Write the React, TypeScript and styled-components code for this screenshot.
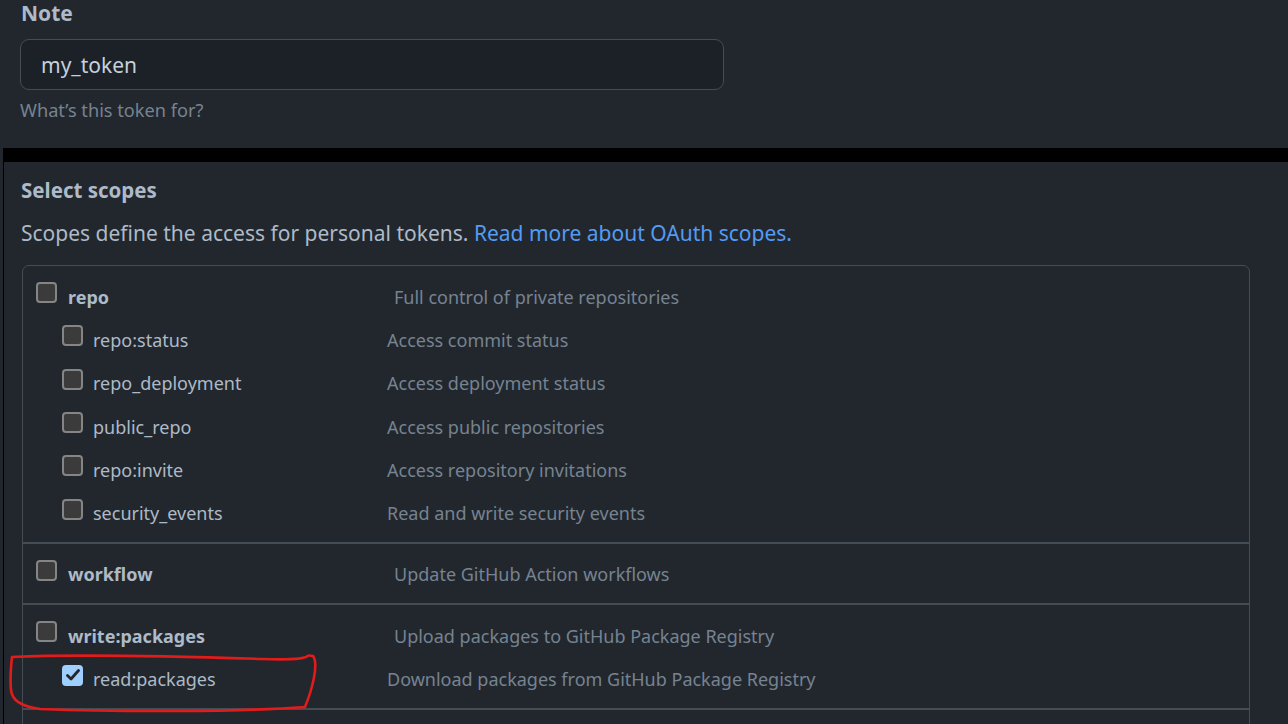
import styled, { createGlobalStyle } from "styled-components";

const GlobalStyle = createGlobalStyle`
  html, body {
    margin: 0;
    padding: 0;
    background: #22272e;
  }
  body {
    font-family: "Segoe UI", "Noto Sans", "Open Sans", sans-serif;
    color: #adbac7;
    overflow: hidden;
  }
`;

const Page = styled.div`
  position: relative;
  width: 1288px;
  height: 724px;
  overflow: hidden;
`;

const NoteSection = styled.section`
  padding: 0 0 0 20px;
  height: 149px;
`;

const FieldLabel = styled.div`
  font-size: 21px;
  font-weight: 700;
  line-height: 28px;
  margin-top: -1px;
  padding-left: 1px;
`;

const TextInput = styled.div`
  box-sizing: border-box;
  width: 704px;
  height: 51px;
  margin-top: 12px;
  padding: 0 20px;
  display: flex;
  align-items: center;
  background: #1c2128;
  border: 1px solid #444c56;
  border-radius: 9px;
  font-size: 21px;
  color: #c5d1de;
`;

const Hint = styled.div`
  margin-top: 8px;
  font-size: 18.2px;
  color: #768390;
`;

const ScopesPanel = styled.section`
  margin-left: 3px;
  border-top: 14px solid #000;
  border-left: 1px solid #000;
  padding: 14px 38px 0 17px;
  height: 600px;
`;

const SectionTitle = styled.h3`
  margin: 0;
  font-size: 20.5px;
  font-weight: 700;
  line-height: 28px;
`;

const Lead = styled.p`
  margin: 15px 0 0;
  font-size: 21px;
  line-height: 28px;
  color: #adbac7;
`;

const Link = styled.a`
  color: #539bf5;
  text-decoration: none;
`;

const ScopeTable = styled.div`
  margin: 18px 0 0 1px;
  border: 1px solid #444c56;
  border-radius: 7px;
`;

const ScopeGroup = styled.div<{ $spacer?: boolean }>`
  padding: 9px 0 7px;
  min-height: ${({ $spacer }) => ($spacer ? "40px" : "0")};
  & + & {
    border-top: 2px solid #444c56;
  }
`;

const ScopeRow = styled.label<{ $nested?: boolean }>`
  display: flex;
  align-items: center;
  height: 43.3px;
  padding-left: ${({ $nested }) => ($nested ? "39px" : "13px")};
`;

const ScopeName = styled.div<{ $nested?: boolean }>`
  display: flex;
  align-items: center;
  gap: ${({ $nested }) => ($nested ? "10px" : "11px")};
  width: ${({ $nested }) => ($nested ? "325px" : "358px")};
  font-size: 18px;
  font-weight: ${({ $nested }) => ($nested ? 400 : 700)};
  color: #adbac7;
`;

const Box = styled.span<{ $checked?: boolean }>`
  box-sizing: border-box;
  flex: none;
  width: 21px;
  height: 21px;
  margin-top: -8px;
  border-radius: 4px;
  border: ${({ $checked }) => ($checked ? "none" : "2px solid #858585")};
  background: ${({ $checked }) => ($checked ? "#9fcfff" : "#3b3b3b")};
  display: flex;
  align-items: center;
  justify-content: center;
`;

const Description = styled.div`
  font-size: 18px;
  color: #768390;
`;

const Annotation = styled.svg`
  position: absolute;
  left: 0;
  top: 0;
  pointer-events: none;
`;

type Scope = { name: string; desc: string; nested?: boolean; checked?: boolean };

const groups: Scope[][] = [
  [
    { name: "repo", desc: "Full control of private repositories" },
    { name: "repo:status", desc: "Access commit status", nested: true },
    { name: "repo_deployment", desc: "Access deployment status", nested: true },
    { name: "public_repo", desc: "Access public repositories", nested: true },
    { name: "repo:invite", desc: "Access repository invitations", nested: true },
    { name: "security_events", desc: "Read and write security events", nested: true },
  ],
  [{ name: "workflow", desc: "Update GitHub Action workflows" }],
  [
    { name: "write:packages", desc: "Upload packages to GitHub Package Registry" },
    { name: "read:packages", desc: "Download packages from GitHub Package Registry", nested: true, checked: true },
  ],
];

function Checkbox({ checked }: { checked?: boolean }) {
  return (
    <Box $checked={checked}>
      {checked && (
        <svg width="14" height="12" viewBox="0 0 14 12">
          <path d="M1.5 6.5 L5 10 L12.5 1.5" fill="none" stroke="#262626" strokeWidth="2.8" strokeLinecap="round" strokeLinejoin="round" />
        </svg>
      )}
    </Box>
  );
}

export default function App() {
  return (
    <Page>
      <GlobalStyle />
      <NoteSection>
        <FieldLabel>Note</FieldLabel>
        <TextInput>my_token</TextInput>
        <Hint>What’s this token for?</Hint>
      </NoteSection>

      <ScopesPanel>
        <SectionTitle>Select scopes</SectionTitle>
        <Lead>
          Scopes define the access for personal tokens. <Link href="#">Read more about OAuth scopes.</Link>
        </Lead>
        <ScopeTable>
          {groups.map((group, gi) => (
            <ScopeGroup key={gi}>
              {group.map((s) => (
                <ScopeRow key={s.name} $nested={s.nested}>
                  <ScopeName $nested={s.nested}>
                    <Checkbox checked={s.checked} />
                    {s.name}
                  </ScopeName>
                  <Description>{s.desc}</Description>
                </ScopeRow>
              ))}
            </ScopeGroup>
          ))}
          <ScopeGroup $spacer />
        </ScopeTable>
      </ScopesPanel>

      <Annotation width="1288" height="724" viewBox="0 0 1288 724">
        <path
          d="M12 657 C 80 654, 200 657, 262 659 S 300 653, 313 656 C 319 664, 312 690, 305 707 C 240 712, 120 712, 40 709 C 20 706, 12 700, 11 690 C 10 680, 11 666, 12 657"
          fill="none"
          stroke="#e21b1b"
          strokeWidth="2.6"
          strokeLinecap="round"
        />
      </Annotation>
    </Page>
  );
}
